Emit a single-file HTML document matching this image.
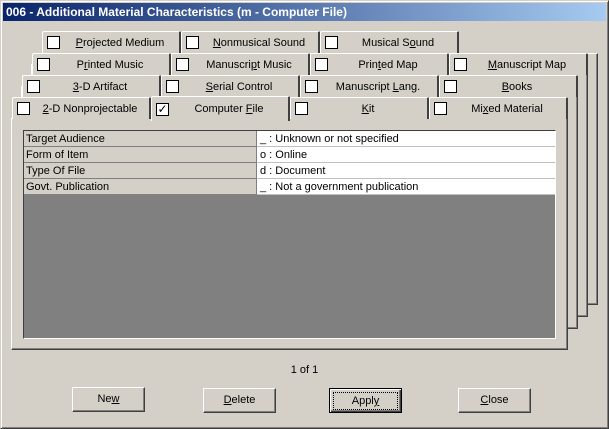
<!DOCTYPE html><html><head><style>
*{margin:0;padding:0;box-sizing:border-box}
body{width:609px;height:429px;background:#d4d0c8;font-family:"Liberation Sans",sans-serif;font-size:11px;color:#000;position:relative;overflow:hidden}
.abs{position:absolute}
.win{left:0;top:0;width:609px;height:429px;border:1px solid;border-color:#d4d0c8 #404040 #404040 #d4d0c8;box-shadow:inset 1px 1px 0 #fff,inset -1px -1px 0 #808080}
.title{left:3px;top:3px;width:603px;height:18px;background:linear-gradient(90deg,#0a246a,#a6caf0);color:#fff;font-weight:bold;font-size:12px;line-height:18px;padding-left:3px}
.layer{background:#d4d0c8;border-top:1px solid #fff;border-left:1px solid #fff;border-right:1px solid #404040;border-bottom:1px solid #404040;box-shadow:inset -1px -1px 0 #808080}
.tab{height:22px;background:#d4d0c8;border-top:1px solid #fff;border-left:1px solid #fff;border-right:2px solid #404040;border-radius:2px 2px 0 0;line-height:23px;text-align:center;padding-left:18px}
.tab i{position:absolute;left:4px;top:4px;width:13px;height:13px;background:#fff;border:1px solid #000;font-style:normal}
u{text-decoration:underline}
.grid{left:23px;top:130px;width:533px;height:209px;background:#808080;border:1px solid;border-color:#404040 #fff #fff #404040}
.row{position:absolute;left:0;height:16px;width:531px;line-height:17px}
.row .l{position:absolute;left:0;width:233px;height:16px;background:#d4d0c8;border-right:1px solid #808080;border-bottom:1px solid #808080;padding-left:2px}
.row .v{position:absolute;left:233px;width:298px;height:16px;background:#fff;border-bottom:1px solid #c0c0c0;padding-left:3px}
.btn{height:25px;width:73px;background:#d4d0c8;border:1px solid;border-color:#fff #404040 #404040 #fff;box-shadow:inset -1px -1px 0 #808080;text-align:center;line-height:23px}
</style></head><body>
<div class="abs win"></div>
<div class="abs title">006 - Additional Material Characteristics (m - Computer File)</div>
<div class="abs layer" style="left:41px;top:53px;width:557px;height:252px"></div>
<div class="abs layer" style="left:31px;top:64px;width:557px;height:253px"></div>
<div class="abs layer" style="left:21px;top:86px;width:557px;height:243px"></div>

<div class="abs tab" style="left:42px;top:31px;width:139px"><i></i><u>P</u>rojected Medium</div>
<div class="abs tab" style="left:181px;top:31px;width:139px"><i></i><u>N</u>onmusical Sound</div>
<div class="abs tab" style="left:320px;top:31px;width:139px"><i></i>Musical S<u>o</u>und</div>

<div class="abs tab" style="left:32px;top:53px;width:139px"><i></i>P<u>r</u>inted Music</div>
<div class="abs tab" style="left:171px;top:53px;width:139px"><i></i>Manuscri<u>p</u>t Music</div>
<div class="abs tab" style="left:310px;top:53px;width:139px"><i></i>Prin<u>t</u>ed Map</div>
<div class="abs tab" style="left:449px;top:53px;width:139px"><i></i><u>M</u>anuscript Map</div>

<div class="abs tab" style="left:22px;top:75px;width:139px"><i></i><u>3</u>-D Artifact</div>
<div class="abs tab" style="left:161px;top:75px;width:139px"><i></i><u>S</u>erial Control</div>
<div class="abs tab" style="left:300px;top:75px;width:139px"><i></i>Manuscript <u>L</u>ang.</div>
<div class="abs tab" style="left:439px;top:75px;width:139px"><i></i><u>B</u>ooks</div>

<div class="abs layer" style="left:11px;top:118px;width:557px;height:232px"></div>
<div class="abs tab" style="left:12px;top:97px;width:139px"><i></i><u>2</u>-D Nonprojectable</div>
<div class="abs tab" style="left:151px;top:96px;width:139px;height:25px;z-index:2;line-height:25px"><i style="top:6px;font-size:12px;line-height:11px;text-align:center">&#10003;</i>Computer <u>F</u>ile</div>
<div class="abs tab" style="left:290px;top:97px;width:139px"><i></i><u>K</u>it</div>
<div class="abs tab" style="left:429px;top:97px;width:139px"><i></i>Mi<u>x</u>ed Material</div>
<div class="abs" style="left:12px;top:119px;width:554px;height:2px;background:#d4d0c8"></div>

<div class="abs grid">
<div class="row" style="top:0"><div class="l">Target Audience</div><div class="v">_ : Unknown or not specified</div></div>
<div class="row" style="top:16px"><div class="l">Form of Item</div><div class="v">o : Online</div></div>
<div class="row" style="top:32px"><div class="l">Type Of File</div><div class="v">d : Document</div></div>
<div class="row" style="top:48px"><div class="l">Govt. Publication</div><div class="v">_ : Not a government publication</div></div>
</div>

<div class="abs" style="left:0;width:609px;top:364px;text-align:center">1 of 1</div>
<div class="abs btn" style="left:72px;top:387px">Ne<u>w</u></div>
<div class="abs btn" style="left:203px;top:388px"><u>D</u>elete</div>
<div class="abs btn" style="left:329px;top:388px;border:1px solid #000;box-shadow:inset 1px 1px 0 #fff,inset -1px -1px 0 #404040,inset -2px -2px 0 #808080"><div style="margin:3px;border:1px dotted #000;line-height:16px">Appl<u>y</u></div></div>
<div class="abs btn" style="left:458px;top:388px"><u>C</u>lose</div>
</body></html>
